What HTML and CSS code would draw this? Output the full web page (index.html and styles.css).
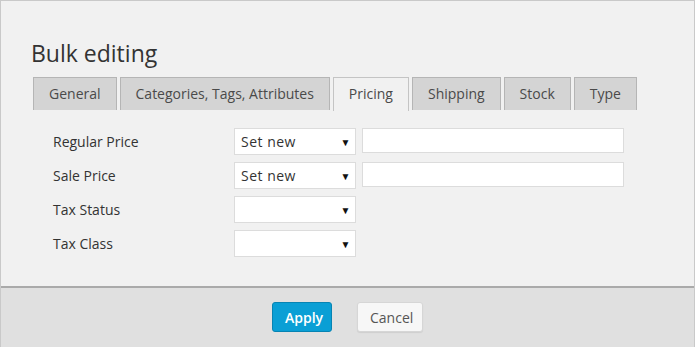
FILE: index.html
```html
<!DOCTYPE html>
<html lang="en">
<head>
    <meta charset="UTF-8">
    <title>Bulk editing</title>
    <link rel="stylesheet" href="styles.css">
</head>
<body>
    <div class="dialog">
        <div class="dialog-body">
            <h1 class="title">Bulk editing</h1>

            <ul class="tabs">
                <li class="tab">General</li>
                <li class="tab">Categories, Tags, Attributes</li>
                <li class="tab active">Pricing</li>
                <li class="tab">Shipping</li>
                <li class="tab">Stock</li>
                <li class="tab">Type</li>
            </ul>

            <div class="fields">
                <div class="field-row">
                    <label class="field-label">Regular Price</label>
                    <div class="select"><span>Set new</span><span class="arrow">▼</span></div>
                    <div class="text-input"></div>
                </div>
                <div class="field-row">
                    <label class="field-label">Sale Price</label>
                    <div class="select"><span>Set new</span><span class="arrow">▼</span></div>
                    <div class="text-input"></div>
                </div>
                <div class="field-row">
                    <label class="field-label">Tax Status</label>
                    <div class="select"><span></span><span class="arrow">▼</span></div>
                </div>
                <div class="field-row">
                    <label class="field-label">Tax Class</label>
                    <div class="select"><span></span><span class="arrow">▼</span></div>
                </div>
            </div>
        </div>

        <div class="dialog-footer">
            <button class="btn btn-primary">Apply</button>
            <button class="btn btn-default">Cancel</button>
        </div>
    </div>
</body>
</html>
```

FILE: styles.css
```css
body, html {
    margin: 0;
    padding: 0;
    height: 100%;
    font-family: 'Open Sans', sans-serif;
    background-color: #f1f1f1;
    overflow: hidden;
}

.dialog {
    box-sizing: border-box;
    height: 347px;
    display: flex;
    flex-direction: column;
    border: 1px solid #c9c9c9;
    border-bottom: none;
}

.dialog-body {
    flex: 1;
    padding: 36px 0 0 30px;
}

.title {
    margin: 0;
    font-size: 23px;
    font-weight: normal;
    line-height: 32px;
    color: #333333;
}

.tabs {
    list-style: none;
    margin: 8px 0 0 2px;
    padding: 0;
    display: flex;
    gap: 3px;
}

.tab {
    height: 33px;
    box-sizing: border-box;
    padding: 0 15px;
    line-height: 32px;
    font-size: 14px;
    color: #4a4a4a;
    background-color: #d4d4d4;
    border: 1px solid #b5b5b5;
    border-bottom: none;
}

.tab.active {
    background-color: #f1f1f1;
    height: 34px;
    border-color: #c4c4c4;
}

.fields {
    padding: 17px 0 0 22px;
    display: flex;
    flex-direction: column;
    gap: 7px;
}

.field-row {
    display: flex;
    align-items: center;
    height: 27px;
}

.field-label {
    width: 181px;
    font-size: 14px;
    color: #333333;
}

.select {
    box-sizing: border-box;
    width: 122px;
    height: 27px;
    background-color: #ffffff;
    border: 1px solid #dcdcdc;
    display: flex;
    justify-content: space-between;
    align-items: center;
    padding: 0 4px 0 6px;
    font-size: 14px;
    color: #333333;
    letter-spacing: 0.5px;
}

.select .arrow {
    font-size: 10px;
    color: #111111;
}

.text-input {
    box-sizing: border-box;
    width: 262px;
    height: 25px;
    margin-left: 6px;
    margin-top: -2px;
    background-color: #ffffff;
    border: 1px solid #dcdcdc;
}

.dialog-footer {
    height: 61px;
    box-sizing: border-box;
    border-top: 2px solid #aaaaaa;
    background-color: #e0e0e0;
    display: flex;
    justify-content: center;
    align-items: flex-start;
    gap: 25px;
    padding-top: 14px;
}

.btn {
    height: 30px;
    font-family: 'Open Sans', sans-serif;
    font-size: 14px;
    border-radius: 3px;
    padding: 0 12px;
}

.btn-primary {
    width: 60px;
    background-color: #0a9fd5;
    border: 1px solid #0784b3;
    color: #ffffff;
    font-weight: 600;
}

.btn-default {
    width: 66px;
    background-color: #f7f7f7;
    border: 1px solid #d6d6d6;
    color: #555555;
    box-shadow: 0 1px 1px rgba(0, 0, 0, 0.08);
}
```
